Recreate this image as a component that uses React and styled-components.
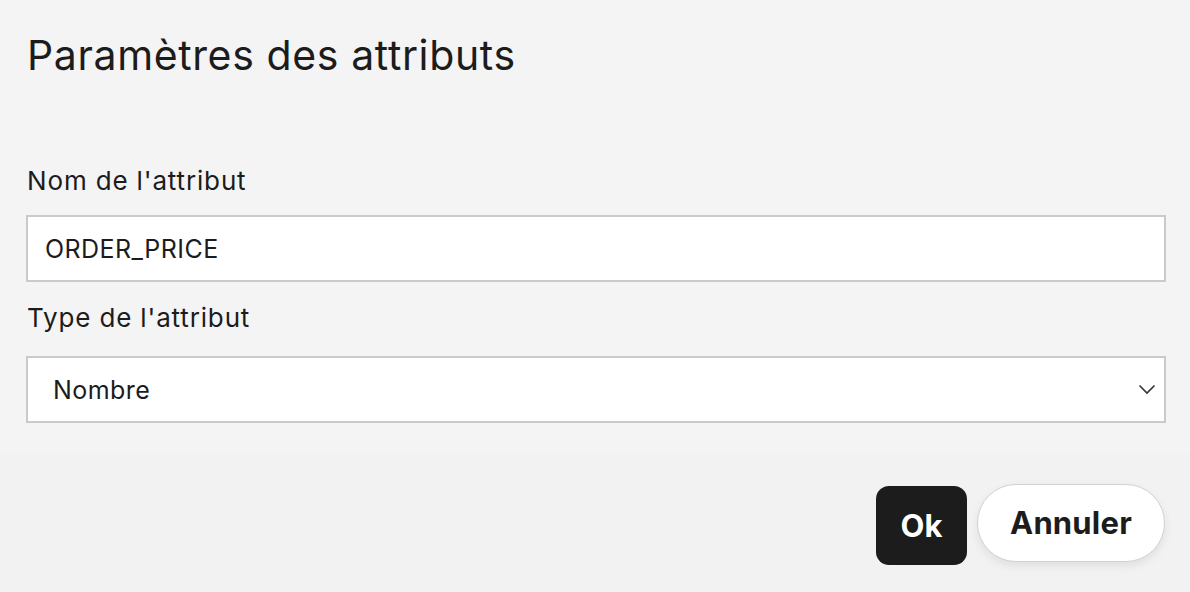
import React from "react";
import styled, { createGlobalStyle } from "styled-components";

const Global = createGlobalStyle`
  html, body { margin: 0; padding: 0; }
  body {
    background: #f4f4f4;
    font-family: Inter, "Noto Sans", sans-serif;
    color: #1c1c1c;
  }
`;

const Dialog = styled.div`
  width: 1190px;
  height: 592px;
  display: flex;
  flex-direction: column;
  background: #f4f4f4;
`;

const Body = styled.div`
  height: 453px;
  box-sizing: border-box;
  padding: 27px 24px 0 26px;
  display: flex;
  flex-direction: column;
`;

const Title = styled.h1`
  margin: 0 0 0 1px;
  font-size: 41px;
  line-height: 56px;
  font-weight: 400;
  letter-spacing: 0.62px;
  color: #1c1c1c;
`;

const Field = styled.div`
  display: flex;
  flex-direction: column;
  margin-top: ${(p) => p.$top}px;
`;

const Label = styled.label`
  font-size: 26px;
  line-height: 32px;
  letter-spacing: 0.85px;
  margin-left: 1px;
  color: #1c1c1c;
`;

const Box = styled.div`
  margin-top: ${(p) => p.$gap}px;
  height: 67px;
  box-sizing: border-box;
  border: 2px solid #cacaca;
  background: #ffffff;
  display: flex;
  align-items: center;
  justify-content: space-between;
  padding: 0 8px 0 ${(p) => p.$pad}px;
  font-size: 25px;
  letter-spacing: 0.45px;
  color: #1c1c1c;
`;

const Footer = styled.div`
  flex: 1;
  background: #f2f2f2;
  display: flex;
  justify-content: flex-end;
  align-items: center;
  gap: 10px;
  padding: 0 25px 0 0;
`;

const PrimaryButton = styled.button`
  width: 91px;
  height: 79px;
  border: none;
  border-radius: 13px;
  background: #1c1c1c;
  color: #ffffff;
  font-family: Inter, sans-serif;
  font-weight: 700;
  font-size: 31px;
  margin-top: 6px;
  padding: 0;
`;

const SecondaryButton = styled.button`
  width: 188px;
  height: 78px;
  border: 1px solid #d2d2d2;
  border-radius: 40px;
  background: #ffffff;
  color: #1c1c1c;
  font-family: Inter, sans-serif;
  font-weight: 700;
  font-size: 31px;
  letter-spacing: 0.2px;
  box-shadow: 0 4px 10px rgba(0, 0, 0, 0.08);
  padding: 0;
`;

const Chevron = () => (
  <svg width="18" height="11" viewBox="0 0 18 11" fill="none">
    <path d="M1.5 1.5 L9 9 L16.5 1.5" stroke="#333" strokeWidth="1.6" />
  </svg>
);

export default function App() {
  return (
    <>
      <Global />
      <Dialog>
        <Body>
          <Title>Paramètres des attributs</Title>
          <Field $top={82}>
            <Label>Nom de l'attribut</Label>
            <Box $gap={18} $pad={17}>ORDER_PRICE</Box>
          </Field>
          <Field $top={20}>
            <Label>Type de l'attribut</Label>
            <Box $gap={22} $pad={25}>
              <span>Nombre</span>
              <Chevron />
            </Box>
          </Field>
        </Body>
        <Footer>
          <PrimaryButton>Ok</PrimaryButton>
          <SecondaryButton>Annuler</SecondaryButton>
        </Footer>
      </Dialog>
    </>
  );
}
